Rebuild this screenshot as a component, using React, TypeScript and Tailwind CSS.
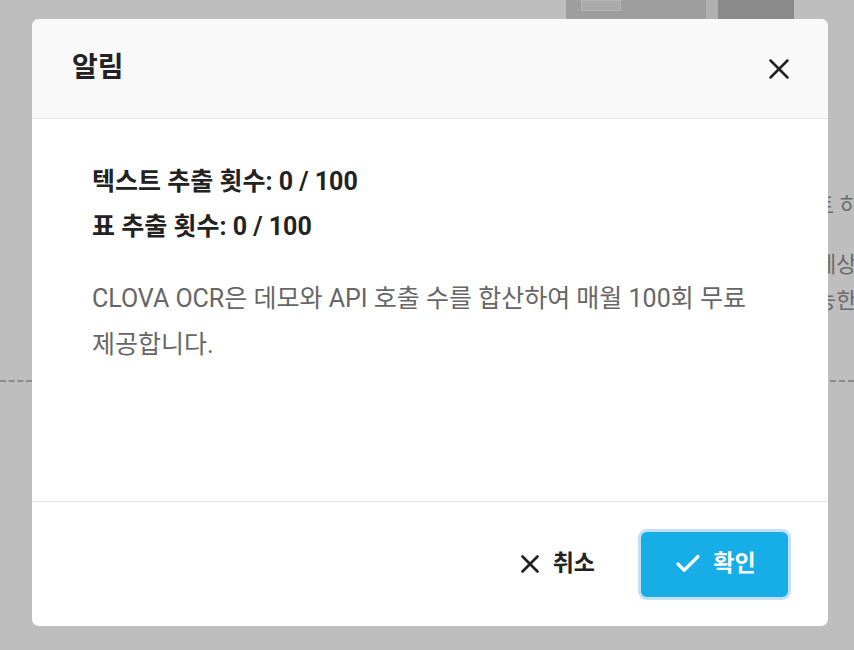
import { X, Check } from "lucide-react"

const font = { fontFamily: "Roboto, 'Noto Sans CJK KR', sans-serif" }

// page behind the overlay, only the edges peek out
const Backdrop = () => {
  return (
    <div className="flex h-full flex-col">
      <div className="flex h-[19px] pl-[566px]">
        <div className="w-[140px] bg-[#9e9e9e] pl-[15px]">
          <div className="h-[11px] w-[40px] border border-[#b4b4b4] bg-[#ababab]" />
        </div>
        <div className="w-[12px] bg-[#b0b0b0]" />
        <div className="w-[76px] bg-[#8a8a8a]" />
      </div>
      <div className="mt-[172px] flex flex-col whitespace-nowrap pl-[814px] text-[22px] leading-[30px] text-[#6b6b6b]">
        <p>트 하</p>
        <p className="mt-[29px] pl-[2px]">세상</p>
        <p className="mt-[6px] pl-[2px]">능한</p>
      </div>
      <div className="mt-[64px] flex justify-between">
        <div className="w-[32px] border-t-2 border-dashed border-[#8c8c8c]" />
        <div className="w-[24px] border-t-2 border-dashed border-[#8c8c8c]" />
      </div>
    </div>
  )
}

const App = () => {
  return (
    <div className="relative h-[650px] w-[854px] overflow-hidden bg-[#bebebe]" style={font}>
      <Backdrop />
      <div className="absolute left-[32px] top-[19px] flex h-[607px] w-[796px] flex-col overflow-hidden rounded-[7px] bg-white">
        <div className="flex h-[100px] shrink-0 items-center justify-between border-b border-[#e6e6e6] bg-[#f9f9f9] pl-[40px] pr-[32px]">
          <h2 className="pb-[2px] text-[28px] font-bold text-[#222]">알림</h2>
          <X size={34} strokeWidth={1.8} className="text-[#222]" />
        </div>
        <div className="flex-1 pl-[60px] pr-[60px] pt-[40px]">
          <p className="text-[25px] font-bold leading-[45px] text-[#222]">텍스트 추출 횟수: 0 / 100</p>
          <p className="text-[25px] font-bold leading-[45px] text-[#222]">표 추출 횟수: 0 / 100</p>
          <p className="mt-[27px] text-[25px] leading-[46px] text-[#666]">
            CLOVA OCR은 데모와 API 호출 수를 합산하여 매월 100회 무료 제공합니다.
          </p>
        </div>
        <div className="flex h-[125px] shrink-0 items-center justify-end gap-[46px] border-t border-[#e6e6e6] pr-[40px]">
          <button className="flex items-center gap-[8px] text-[23px] font-bold text-[#222]">
            <X size={30} strokeWidth={2.2} />
            취소
          </button>
          <button className="flex h-[65px] w-[147px] items-center justify-center gap-[10px] rounded-[6px] bg-[#17ade7] text-[23px] font-bold text-white ring-[3px] ring-[#c2e1f8]">
            <Check size={30} strokeWidth={2.6} />
            확인
          </button>
        </div>
      </div>
    </div>
  )
}

export default App
